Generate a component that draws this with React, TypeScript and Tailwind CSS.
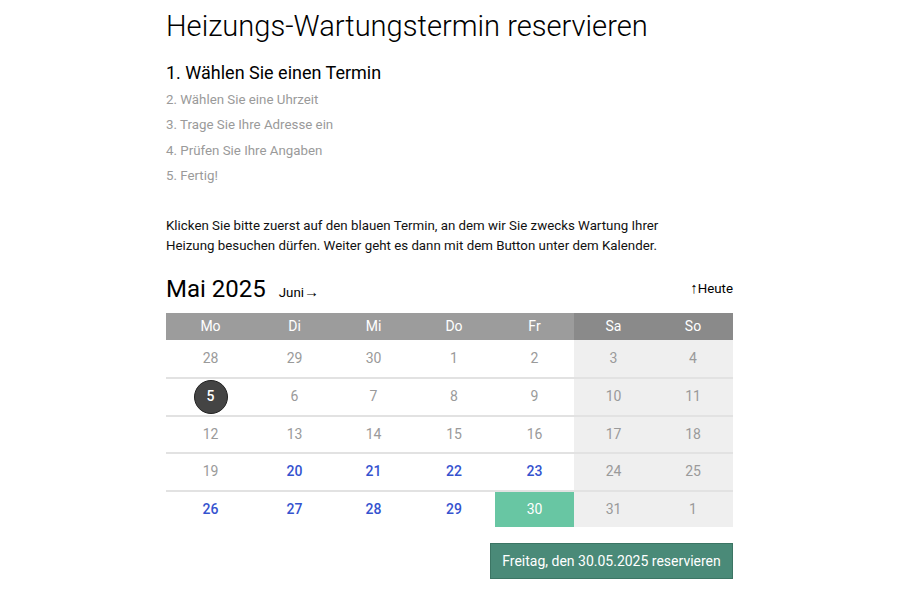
import React from "react";

type Day = { n: number; kind: "muted" | "free" | "today" | "selected" };

const weeks: Day[][] = [
  [28, 29, 30, 1, 2, 3, 4].map((n) => ({ n, kind: "muted" as const })),
  [5, 6, 7, 8, 9, 10, 11].map((n, i) => ({ n, kind: i === 0 ? ("today" as const) : ("muted" as const) })),
  [12, 13, 14, 15, 16, 17, 18].map((n) => ({ n, kind: "muted" as const })),
  [19, 20, 21, 22, 23, 24, 25].map((n, i) => ({ n, kind: i >= 1 && i <= 4 ? ("free" as const) : ("muted" as const) })),
  [26, 27, 28, 29, 30, 31, 1].map((n, i) => ({
    n,
    kind: i < 4 ? ("free" as const) : i === 4 ? ("selected" as const) : ("muted" as const),
  })),
];

const heads = ["Mo", "Di", "Mi", "Do", "Fr", "Sa", "So"];

const steps = [
  "2. Wählen Sie eine Uhrzeit",
  "3. Trage Sie Ihre Adresse ein",
  "4. Prüfen Sie Ihre Angaben",
  "5. Fertig!",
];

const cols = "grid grid-cols-[89px_79px_79px_82px_79px_79px_80px]";

const DayCell = ({ day, col }: { day: Day; col: number }) => {
  const weekend = col >= 5;
  if (day.kind === "selected") {
    return (
      <div className="h-full flex items-center justify-center bg-[#68c6a3] text-white text-[14px]">
        {day.n}
      </div>
    );
  }
  return (
    <div
      className={`h-full flex items-center justify-center text-[14px] ${
        weekend ? "bg-[#efefef]" : "bg-white"
      } ${day.kind === "free" ? "text-[#3553cf] font-medium" : "text-[#9a9a9a]"}`}
    >
      {day.kind === "today" ? (
        <div className="w-[34px] h-[34px] rounded-full bg-[#444] border border-[#222] text-white font-medium flex items-center justify-center">
          {day.n}
        </div>
      ) : (
        day.n
      )}
    </div>
  );
};

export default function App() {
  return (
    <div className="w-[900px] h-[600px] bg-white font-['Roboto',sans-serif] text-black">
      <div className="w-[567px] ml-[166px] pt-[7px]">
        <h1 className="text-[29.1px] font-light leading-[38px]">
          Heizungs-Wartungstermin reservieren
        </h1>
        <div className="mt-[17px] text-[18px] leading-[22px]">1. Wählen Sie einen Termin</div>
        <div className="mt-[3px] flex flex-col text-[13.3px] text-[#9a9a9a]">
          {steps.map((s) => (
            <div key={s} className="leading-[25.4px]">
              {s}
            </div>
          ))}
        </div>
        <p className="mt-[27px] text-[13.3px] leading-[20px] text-[#111]">
          Klicken Sie bitte zuerst auf den blauen Termin, an dem wir Sie zwecks Wartung Ihrer
          <br />
          Heizung besuchen dürfen. Weiter geht es dann mit dem Button unter dem Kalender.
        </p>
        <div className="mt-[14px] flex items-end justify-between h-[34px]">
          <div className="flex items-end">
            <span className="text-[24px] leading-[30px]">Mai 2025</span>
            <span className="ml-[13px] text-[13.3px] leading-[20px] mb-[1px]">
              Juni<span className="text-[15px] font-medium">→</span>
            </span>
          </div>
          <span className="text-[13.3px] leading-[20px] mb-[5px]">
            <span className="text-[15px] font-medium">↑</span>Heute
          </span>
        </div>
        <div className={`mt-[9px] ${cols}`}>
          {heads.map((h, i) => (
            <div
              key={h}
              className={`h-[27px] flex items-center justify-center text-white text-[14px] ${
                i >= 5 ? "bg-[#8a8a8a]" : "bg-[#9c9c9c]"
              }`}
            >
              {h}
            </div>
          ))}
        </div>
        {weeks.map((w, r) => (
          <div
            key={r}
            className={`${cols} h-[37.5px] ${r > 0 ? "border-t-2 border-[#e2e2e2]" : ""}`}
          >
            {w.map((d, c) => (
              <DayCell key={c} day={d} col={c} />
            ))}
          </div>
        ))}
        <div className="mt-[16px] flex justify-end">
          <button className="w-[243px] h-[36px] bg-[#4a8a78] border border-[#3c7564] text-white text-[14px]">
            Freitag, den 30.05.2025 reservieren
          </button>
        </div>
      </div>
    </div>
  );
}
